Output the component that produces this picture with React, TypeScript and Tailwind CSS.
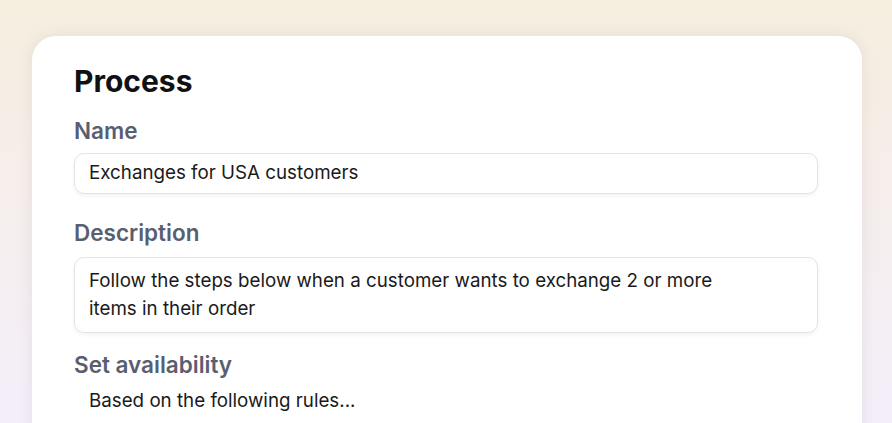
import React from "react";

function Field({ label, children }: { label: string; children: React.ReactNode }) {
  return (
    <div className="flex flex-col">
      <div className="text-[22.5px] leading-[28px] font-semibold text-[#595e70]">{label}</div>
      {children}
    </div>
  );
}

export default function App() {
  return (
    <div
      className="w-[892px] h-[423px] overflow-hidden bg-gradient-to-b from-[#f6eedf] to-[#f4eefb] pt-[36px] pl-[32px] pr-[30px]"
      style={{ fontFamily: "Inter, 'Noto Sans', sans-serif" }}
    >
      <div className="bg-white rounded-t-[24px] h-[420px] pl-[42px] pr-[44px] pt-[25px] shadow-[0_0_14px_rgba(120,100,80,0.12)]">
        <h1 className="text-[30px] leading-[40px] font-bold text-[#111111]">Process</h1>
        <div className="mt-[16px]">
          <Field label="Name">
            <div className="mt-[8px] h-[41px] rounded-[10px] border border-[#e3e3e6] shadow-[0_2px_4px_rgba(0,0,0,0.05)] px-[14px] flex items-center text-[18.75px] text-[#1a1a1a]">
              Exchanges for USA customers
            </div>
          </Field>
        </div>
        <div className="mt-[25px]">
          <Field label="Description">
            <div className="mt-[10px] h-[76px] rounded-[10px] border border-[#e3e3e6] shadow-[0_2px_4px_rgba(0,0,0,0.05)] px-[14px] py-[9px] text-[18.75px] leading-[28px] text-[#1a1a1a]">
              Follow the steps below when a customer wants to exchange 2 or more
              <br />
              items in their order
            </div>
          </Field>
        </div>
        <div className="mt-[18px]">
          <Field label="Set availability">
            <div className="mt-[8px] pl-[15px] text-[18.75px] leading-[28px] text-[#1a1a1a]">
              Based on the following rules...
            </div>
          </Field>
        </div>
      </div>
    </div>
  );
}
